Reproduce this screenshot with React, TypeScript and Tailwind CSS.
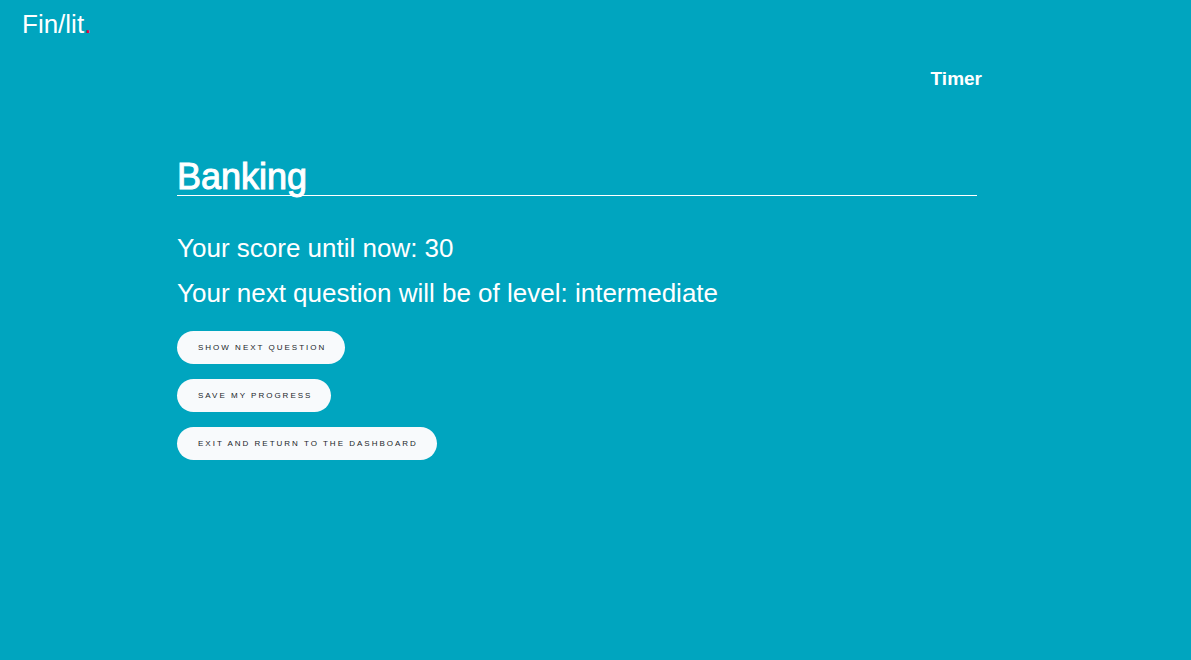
import React from "react";

const actions = ["Show next question", "Save my progress", "Exit and return to the dashboard"];

export default function App() {
  return (
    <div className="min-h-screen bg-[#00a5bf] font-['Liberation_Sans',Arial,sans-serif] text-white">
      <header className="px-[22px] pt-2">
        <a href="#" className="inline-block text-[26px] leading-8">
          Fin/lit<span className="text-[#e8003f]">.</span>
        </a>
      </header>
      <main className="mx-auto w-full max-w-[837px] pt-6">
        <p className="pr-8 text-right text-[19px] leading-[30px] font-bold">Timer</p>
        <div className="pr-[37px]">
          <h1 className="mt-[62px] h-10 border-b border-white text-4xl leading-[42px] [-webkit-text-stroke:1px_white]">
            Banking
          </h1>
          <p className="mt-[30px] text-[26px] leading-[45px]">Your score until now: 30</p>
          <p className="text-[26px] leading-[45px]">Your next question will be of level: intermediate</p>
          <div className="mt-[15px] flex flex-col items-start gap-[15px]">
            {actions.map((label) => (
              <button
                key={label}
                type="button"
                className="h-[33px] rounded-full bg-[#f8fafc] pr-[19px] pl-[21px] text-[8px] tracking-[2px] text-[#212529] uppercase"
              >
                {label}
              </button>
            ))}
          </div>
        </div>
      </main>
    </div>
  );
}
